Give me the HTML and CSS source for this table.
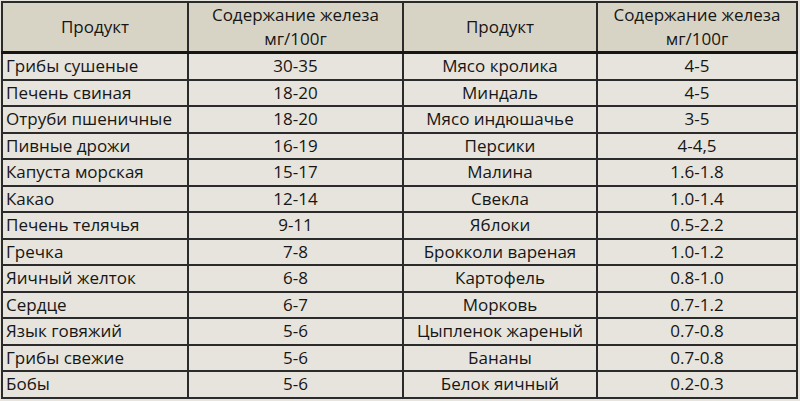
FILE: index.html
```html
<!DOCTYPE html>
<html lang="ru">
<head>
<meta charset="utf-8">
<link rel="stylesheet" href="styles.css">
</head>
<body>
<table class="iron">
  <colgroup>
    <col class="c1"><col class="c2"><col class="c3"><col class="c4">
  </colgroup>
  <thead>
    <tr>
      <th>Продукт</th>
      <th>Содержание железа<br>мг/100г</th>
      <th>Продукт</th>
      <th>Содержание железа<br>мг/100г</th>
    </tr>
  </thead>
  <tbody>
    <tr><td>Грибы сушеные</td><td>30-35</td><td>Мясо кролика</td><td>4-5</td></tr>
    <tr><td>Печень свиная</td><td>18-20</td><td>Миндаль</td><td>4-5</td></tr>
    <tr><td>Отруби пшеничные</td><td>18-20</td><td>Мясо индюшачье</td><td>3-5</td></tr>
    <tr><td>Пивные дрожи</td><td>16-19</td><td>Персики</td><td>4-4,5</td></tr>
    <tr><td>Капуста морская</td><td>15-17</td><td>Малина</td><td>1.6-1.8</td></tr>
    <tr><td>Какао</td><td>12-14</td><td>Свекла</td><td>1.0-1.4</td></tr>
    <tr><td>Печень телячья</td><td>9-11</td><td>Яблоки</td><td>0.5-2.2</td></tr>
    <tr><td>Гречка</td><td>7-8</td><td>Брокколи вареная</td><td>1.0-1.2</td></tr>
    <tr><td>Яичный желток</td><td>6-8</td><td>Картофель</td><td>0.8-1.0</td></tr>
    <tr><td>Сердце</td><td>6-7</td><td>Морковь</td><td>0.7-1.2</td></tr>
    <tr><td>Язык говяжий</td><td>5-6</td><td>Цыпленок жареный</td><td>0.7-0.8</td></tr>
    <tr><td>Грибы свежие</td><td>5-6</td><td>Бананы</td><td>0.7-0.8</td></tr>
    <tr><td>Бобы</td><td>5-6</td><td>Белок яичный</td><td>0.2-0.3</td></tr>
  </tbody>
</table>
</body>
</html>
```

FILE: styles.css
```css
html, body {
  margin: 0;
  padding: 0;
  background: #e6e4dc;
}
body {
  padding: 1px 0 0 1px;
  font-family: "Open Sans", "Noto Sans", sans-serif;
  font-weight: 500;
  color: #161616;
}
.iron {
  border-collapse: collapse;
  table-layout: fixed;
  width: 797px;
  background: #e6e4dc;
  border: 2px solid #2b2b2b;
}
.c1 { width: 186px; }
.c2 { width: 215px; }
.c3 { width: 194px; }
.c4 { width: 200px; }
.iron th {
  background: #d8d4c5;
  font-weight: 500;
  font-size: 17px;
  line-height: 24px;
  height: 48px;
  padding: 0;
  border-left: 2px solid #2b2b2b;
  border-bottom: 3px solid #151515;
  text-align: center;
}
.iron td {
  font-size: 17px;
  height: 24.5px;
  padding: 0;
  line-height: 20px;
  border: 2px solid #2b2b2b;
  text-align: center;
}
.iron td:first-child {
  text-align: left;
  padding-left: 3px;
}
```
